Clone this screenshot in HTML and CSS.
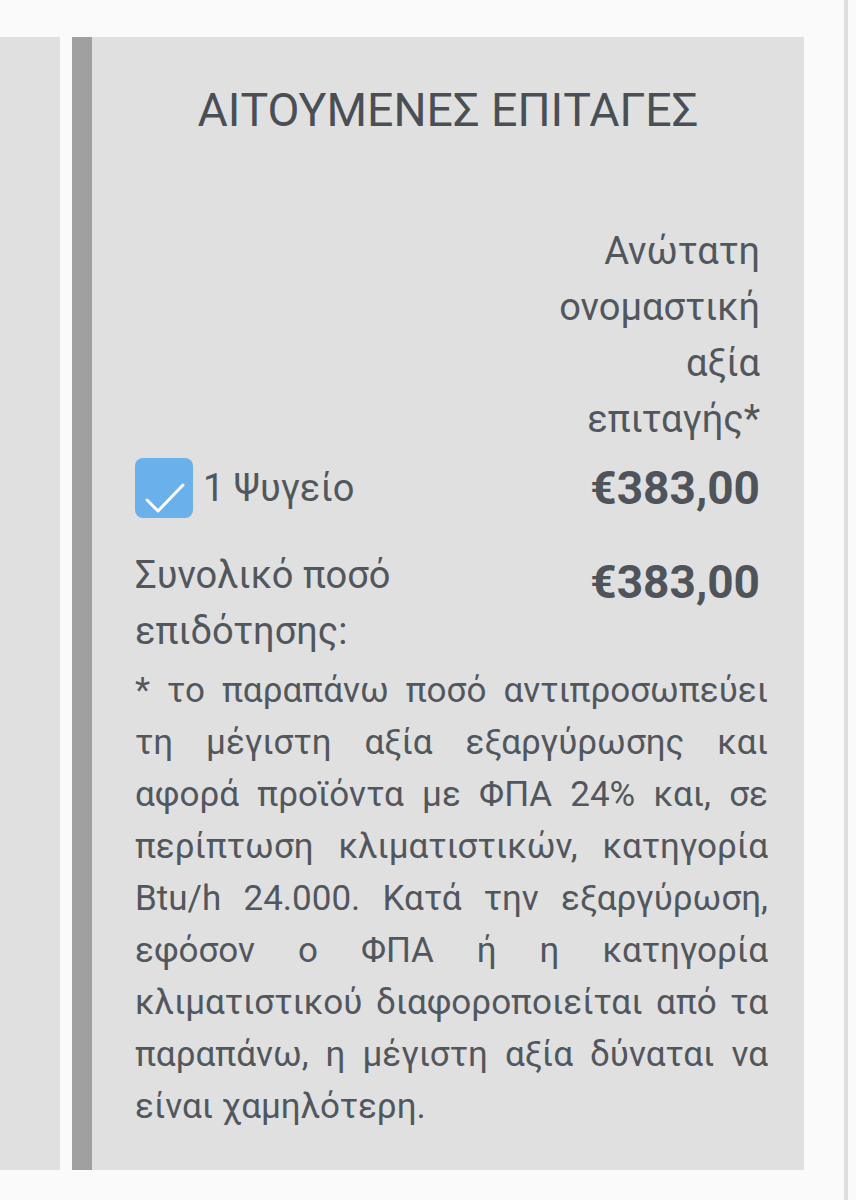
FILE: index.html
```html
<!DOCTYPE html>
<html lang="el">
<head>
    <meta charset="UTF-8">
    <meta name="viewport" content="width=device-width, initial-scale=1.0">
    <title>Αιτούμενες επιταγές</title>
    <link rel="stylesheet" href="styles.css">
</head>
<body>
    <div class="main">
        <div class="side-panel"></div>

        <div class="vouchers">
            <h2 class="vouchers-title"><span>ΑΙΤΟΥΜΕΝΕΣ ΕΠΙΤΑΓΕΣ</span></h2>

            <div class="voucher-table">
                <div class="cell"></div>
                <div class="cell value-head">Ανώτατη ονομαστική αξία επιταγής*</div>

                <label class="cell item">
                    <span class="checkbox">
                        <svg viewBox="0 0 58 60" width="58" height="60">
                            <path d="M12 42 L23 53 L48 27" fill="none" stroke="#fff" stroke-width="3" stroke-linecap="round" stroke-linejoin="round"/>
                        </svg>
                    </span>
                    1 Ψυγείο
                </label>
                <div class="cell price">€383,00</div>

                <div class="cell total-label">Συνολικό ποσό επιδότησης:</div>
                <div class="cell price total">€383,00</div>
            </div>

            <p class="footnote">* το παραπάνω ποσό αντιπροσωπεύει τη μέγιστη αξία εξαργύρωσης και αφορά προϊόντα με ΦΠΑ 24% και, σε περίπτωση κλιματιστικών, κατηγορία Btu/h 24.000. Κατά την εξαργύρωση, εφόσον ο ΦΠΑ ή η κατηγορία κλιματιστικού διαφοροποιείται από τα παραπάνω, η μέγιστη αξία δύναται να είναι χαμηλότερη.</p>
        </div>
    </div>
    <div class="edge"></div>
</body>
</html>
```

FILE: styles.css
```css
body {
    font-family: 'Roboto', 'Noto Sans', sans-serif;
    margin: 0;
    padding: 0;
    background-color: #FAFAFA;
    color: #52575D;
    display: flex;
    min-height: 1200px;
}

.main {
    flex: 1;
    display: flex;
    gap: 12px;
    padding: 37px 40px 30px 0;
    align-items: stretch;
}

.edge {
    width: 4px;
    background-color: #DEDEDE;
    margin-right: 8px;
}

.side-panel {
    width: 60px;
    background-color: #E0E0E0;
}

.vouchers {
    flex: 1;
    background-color: #E0E0E0;
    border-left: 20px solid #A0A0A0;
    padding: 45px 44px 37px 43px;
}

.vouchers-title {
    margin: 0;
    text-align: center;
    font-weight: 400;
    font-size: 46px;
    line-height: 56px;
    color: #4A4F56;
}

.vouchers-title span {
    display: inline-block;
    transform: scaleX(1.01);
}

.voucher-table {
    display: grid;
    grid-template-columns: 1fr 205px;
    margin-top: 85px;
    font-size: 38px;
    line-height: 56px;
}

.value-head {
    text-align: right;
}

.item {
    display: flex;
    align-items: center;
    gap: 10px;
    margin-top: 11px;
    height: 60px;
}

.checkbox {
    width: 58px;
    height: 60px;
    border-radius: 8px;
    background-color: #6AB1EB;
    display: flex;
}

.price {
    text-align: right;
    font-weight: 700;
    font-size: 46px;
    color: #4F545A;
    line-height: 60px;
    margin-top: 11px;
}

.total-label {
    margin-top: 29px;
}

.price.total {
    margin-top: 34px;
}

.footnote {
    margin: 6px -8px 0 0;
    font-size: 35px;
    line-height: 52px;
    text-align: justify;
}
```
